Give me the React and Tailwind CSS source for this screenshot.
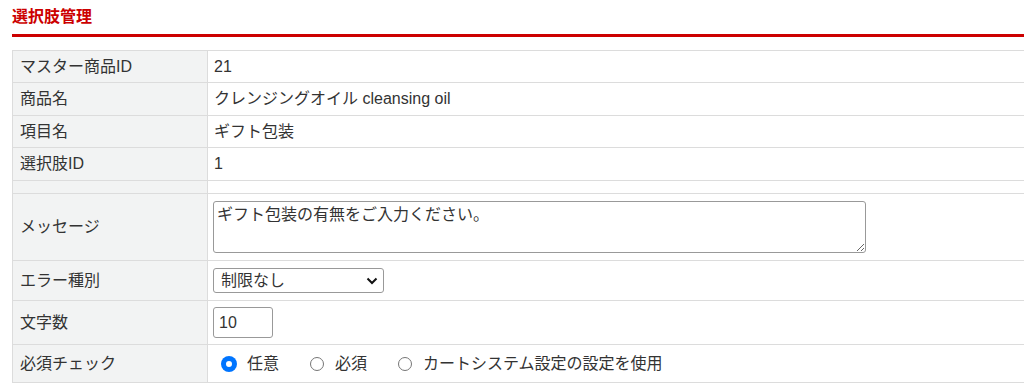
const rows = [
  { label: "マスター商品ID", h: "h-[32px]", value: "21" },
  { label: "商品名", h: "h-[33px]", value: "クレンジングオイル cleansing oil" },
  { label: "項目名", h: "h-[32px]", value: "ギフト包装" },
  { label: "選択肢ID", h: "h-[33px]", value: "1" },
];

const Radio = ({ checked, label }) => (
  <label className="flex items-center">
    <span
      className={
        checked
          ? "w-[14px] h-[14px] rounded-full border-[4px] border-[#0075ff] bg-white ring-1 ring-[#0075ff]"
          : "w-[14px] h-[14px] rounded-full border border-[#767676] bg-white"
      }
    />
    <span className="ml-[11px]">{label}</span>
  </label>
);

export default function App() {
  return (
    <div
      className="w-[1024px] h-[391px] overflow-hidden bg-white text-[16px] leading-[20px] text-[#333]"
      style={{ fontFamily: '"Liberation Sans", "Noto Sans CJK JP", sans-serif' }}
    >
      <div className="pl-[12px]">
        <h1 className="pt-[8px] h-[34px] text-[16px] leading-[18px] font-bold text-[#cc0000]">
          選択肢管理
        </h1>
        <div className="h-[3px] bg-[#cc0000] w-[1100px]" />
        <table className="mt-[13px] w-[1100px] border-collapse">
          <tbody>
            {rows.map((r) => (
              <tr key={r.label} className={r.h}>
                <th className="w-[195px] border border-[#dcdcdc] bg-[#f2f3f3] pl-[7px] text-left font-normal">
                  {r.label}
                </th>
                <td className="border border-[#dcdcdc] pl-[6px]">{r.value}</td>
              </tr>
            ))}
            <tr className="h-[13px]">
              <th className="border border-[#dcdcdc] bg-[#f2f3f3]" />
              <td className="border border-[#dcdcdc]" />
            </tr>
            <tr className="h-[67px]">
              <th className="border border-[#dcdcdc] bg-[#f2f3f3] pl-[7px] text-left font-normal">
                メッセージ
              </th>
              <td className="border border-[#dcdcdc] pl-[5px]">
                <textarea
                  className="block w-[653px] h-[52px] border border-[#999] rounded-[3px] px-[3px] py-[3px] leading-[20px] resize-y"
                  defaultValue="ギフト包装の有無をご入力ください。"
                />
              </td>
            </tr>
            <tr className="h-[40px]">
              <th className="border border-[#dcdcdc] bg-[#f2f3f3] pl-[7px] text-left font-normal">
                エラー種別
              </th>
              <td className="border border-[#dcdcdc] pl-[5px]">
                <div className="relative w-[171px] h-[25px] border border-[#999] rounded-[3px] flex items-center pl-[7px]">
                  <span>制限なし</span>
                  <svg
                    className="absolute right-[5px] top-[8px]"
                    width="12"
                    height="8"
                    viewBox="0 0 12 8"
                    fill="none"
                    stroke="#111"
                    strokeWidth="2"
                  >
                    <path d="M1.5 1.5 L6 6 L10.5 1.5" />
                  </svg>
                </div>
              </td>
            </tr>
            <tr className="h-[44px]">
              <th className="border border-[#dcdcdc] bg-[#f2f3f3] pl-[7px] text-left font-normal">
                文字数
              </th>
              <td className="border border-[#dcdcdc] pl-[5px]">
                <input
                  className="block w-[60px] h-[31px] border border-[#999] rounded-[3px] px-[5px]"
                  defaultValue="10"
                />
              </td>
            </tr>
            <tr className="h-[38px]">
              <th className="border border-[#dcdcdc] bg-[#f2f3f3] pl-[7px] text-left font-normal">
                必須チェック
              </th>
              <td className="border border-[#dcdcdc] pl-[14px]">
                <div className="flex items-center gap-[31px]">
                  <Radio checked label="任意" />
                  <Radio label="必須" />
                  <Radio label="カートシステム設定の設定を使用" />
                </div>
              </td>
            </tr>
          </tbody>
        </table>
      </div>
    </div>
  );
}
